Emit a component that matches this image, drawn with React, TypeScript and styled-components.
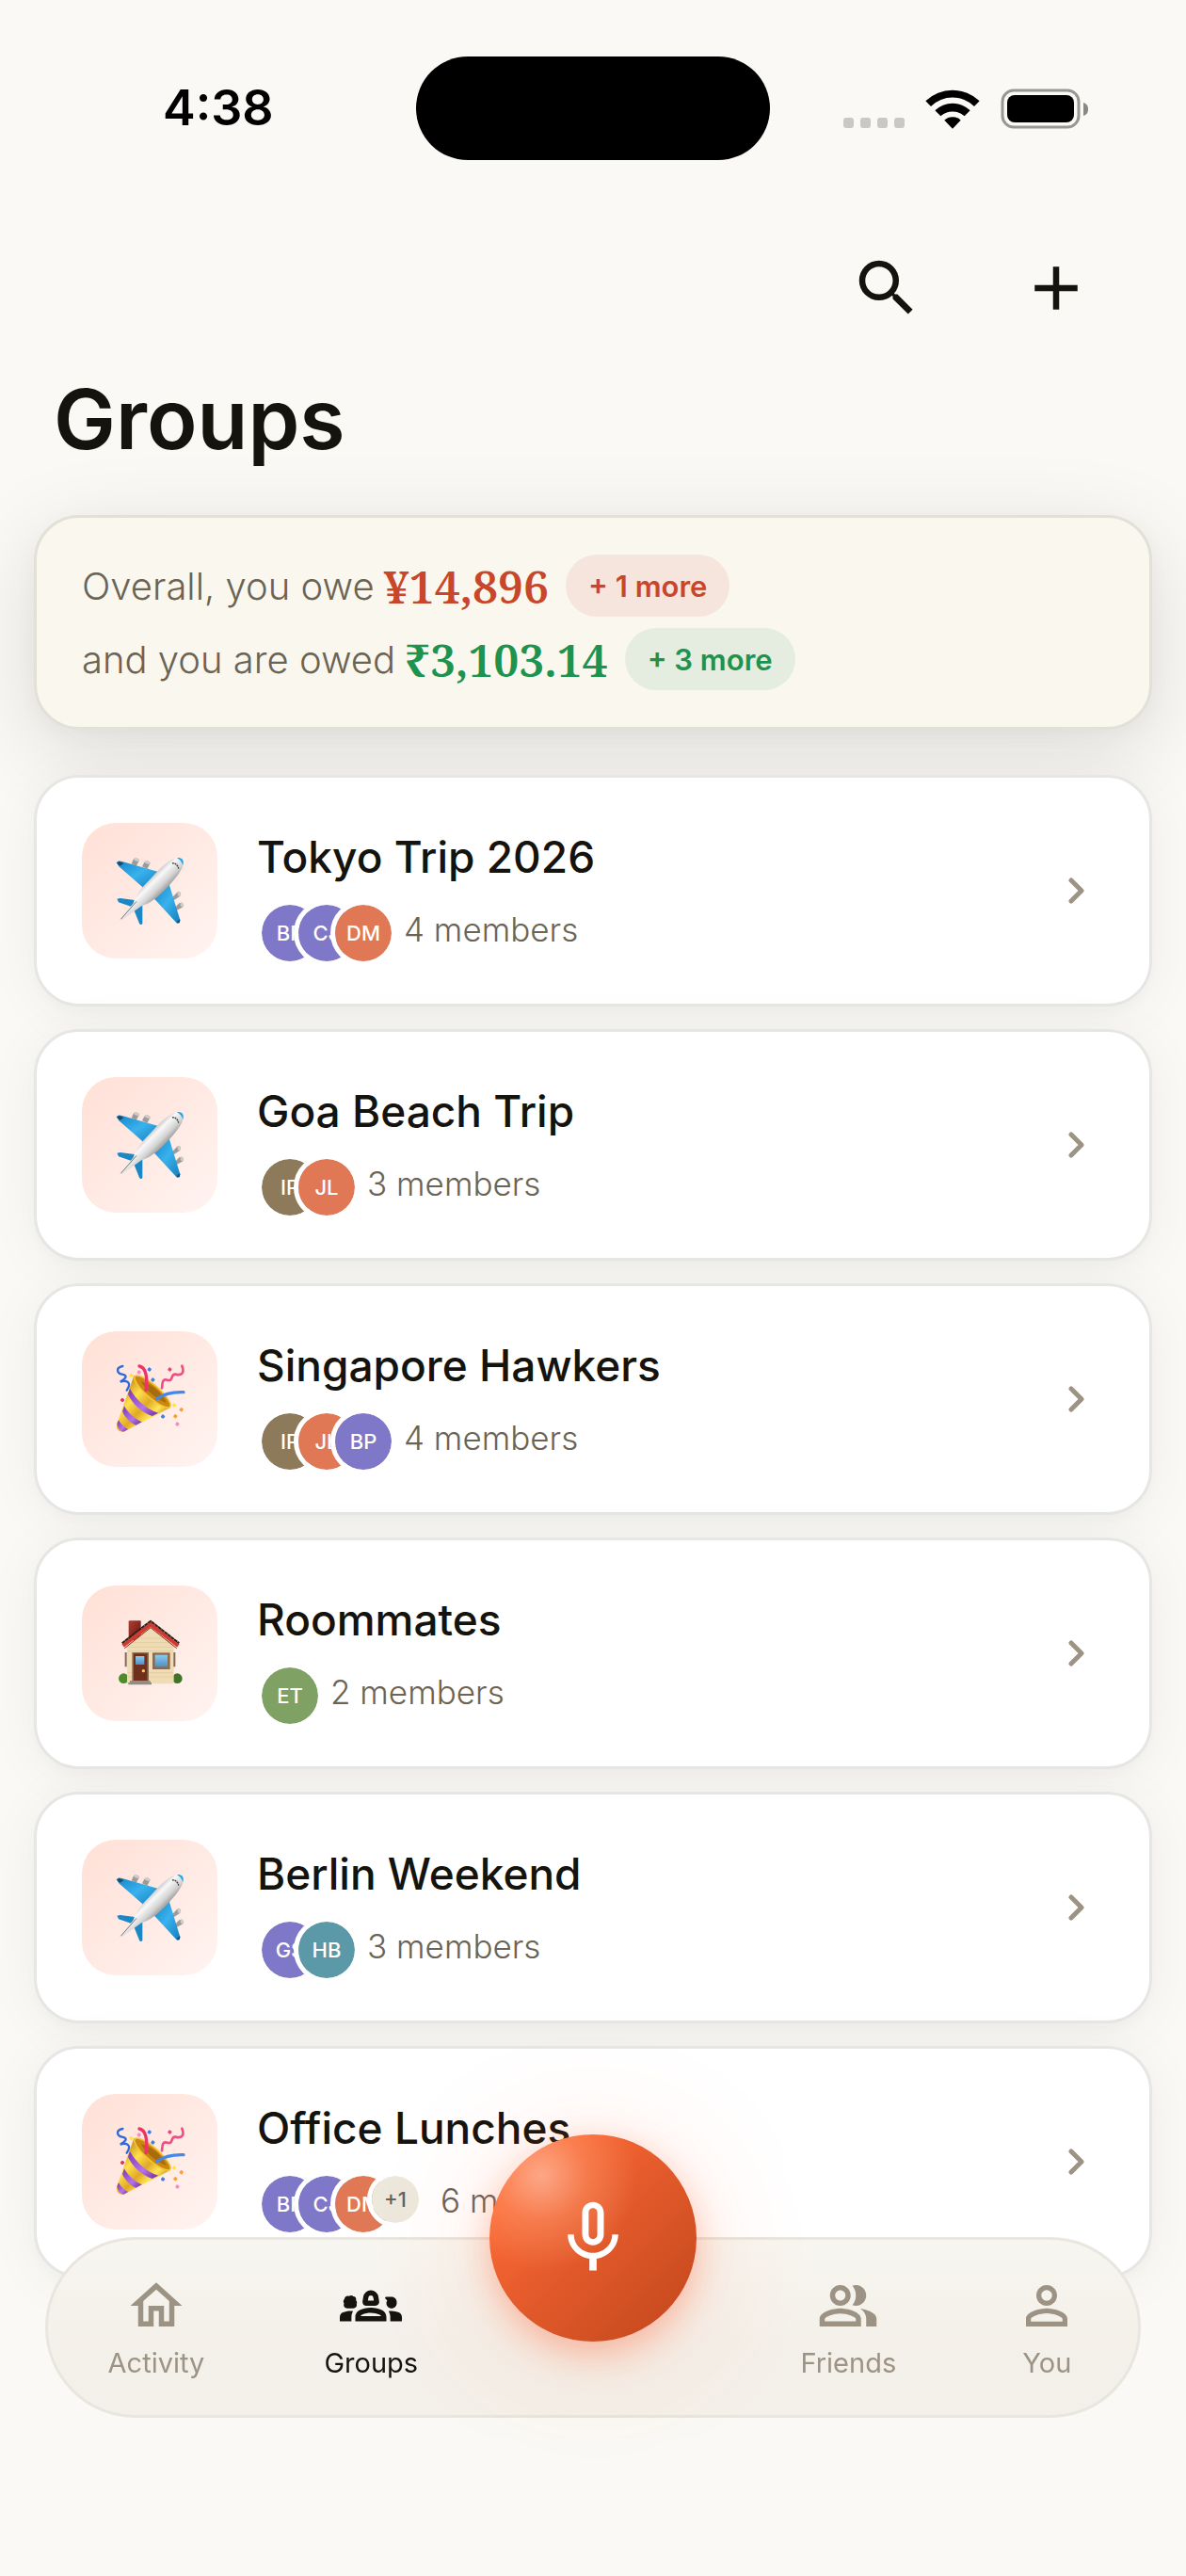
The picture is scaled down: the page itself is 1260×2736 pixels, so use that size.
import React, {useState} from 'react'


import styled, {createGlobalStyle} from 'styled-components';
import {
    MdAdd,
    MdMicNone,
    MdOutlineGroups2,
    MdOutlineHome,
    MdOutlinePeopleAlt,
    MdPersonOutline,
    MdSearch
} from 'react-icons/md';

const GlobalStyle = createGlobalStyle`
  * {
    box-sizing: border-box;
  }
  body {
    margin: 0;
    background: #faf9f5;
    color: #14130e;
    font-family: Inter, sans-serif;
  }
  button {
    padding: 0;
    border: 0;
    background: none;
    color: inherit;
    font: inherit;
    cursor: pointer;
  }
`;

const Screen = styled("div")`
  min-height: 100vh;
  overflow: hidden;
  padding-bottom: 316px;
`;

/* status bar */

const StatusBar = styled("div")`
  display: grid;
  grid-template-columns: 1fr 376px 1fr;
  align-items: center;
  padding-top: 60px;
  color: #000000;
`;

const Time = styled("span")`
  padding-left: 173px;
  font-size: 52px;
  font-weight: 600;
  line-height: 60px;
`;

const Island = styled("div")`
  height: 110px;
  border-radius: 55px;
  background: #000000;
`;

const StatusIcons = styled("div")`
  display: flex;
  justify-content: flex-end;
  align-items: center;
  gap: 22px;
  padding-right: 104px;
`;

/* header */

const Toolbar = styled("div")`
  display: flex;
  justify-content: flex-end;
  gap: 48px;
  padding: 70px 72px 0;
`;

const ToolButton = styled("button")`
  display: flex;
  align-items: center;
  justify-content: center;
  width: 132px;
  height: 132px;
  font-size: 78px;
`;

const Title = styled("h1")`
  margin: 20px 57px 48px;
  font-size: 88px;
  font-weight: 600;
  line-height: 107px;
`;

/* balance summary */

const Summary = styled("section")`
  margin: 0 36px 48px;
  padding: 33px 48px;
  border: 3px solid #e2e1d8;
  border-radius: 48px;
  background: #faf7ee;
  box-shadow: 0 24px 96px rgba(20, 19, 14, 0.12), 0 6px 24px rgba(20, 19, 14, 0.03);
`;

const SummaryLine = styled("div")`
  display: flex;
  align-items: center;
  height: 78px;
  font-size: 40px;
  font-weight: 300;
  color: #6b6354;
`;

const Amount = styled("strong")<{ $tone: string }>`
  margin: 0 18px 0 10px;
  font-family: "Noto Serif", "Liberation Serif", serif;
  font-size: 48px;
  font-weight: 600;
  color: ${props => props.$tone};
`;

const Pill = styled("button")<{ $tone: string; $tint: string }>`
  && {
    height: 66px;
    padding: 0 24px;
    border-radius: 33px;
    background: ${props => props.$tint};
    color: ${props => props.$tone};
    font-size: 31px;
    font-weight: 600;
  }
`;

/* group cards */

const GroupList = styled("ul")`
  display: flex;
  flex-direction: column;
  gap: 24px;
  margin: 0;
  padding: 0 36px;
  list-style: none;
`;

const GroupCard = styled("button")`
  && {
    display: flex;
    align-items: flex-start;
    width: 100%;
    padding: 48px;
    border: 3px solid #e6e6e4;
    border-radius: 48px;
    background: #ffffff;
    text-align: left;
    box-shadow: 0 6px 60px rgba(20, 19, 14, 0.05), 0 6px 12px rgba(20, 19, 14, 0.02);
  }
`;

const Tile = styled("span")`
  display: flex;
  align-items: center;
  justify-content: center;
  width: 144px;
  height: 144px;
  margin-right: 42px;
  border-radius: 36px;
  background: linear-gradient(135deg, #ffe0d6, #fff4f1);
`;

const Info = styled("span")`
  flex: 1;
  padding-top: 6px;
`;

const GroupName = styled("span")`
  display: block;
  font-size: 46px;
  font-weight: 500;
  line-height: 60px;
`;

const MemberRow = styled("span")`
  display: flex;
  align-items: flex-start;
  gap: 8px;
  margin-top: 16px;
`;

const AvatarStack = styled("span")`
  display: flex;
  align-items: flex-start;
  height: 54px;
`;

const Avatar = styled("span")<{ $color: string }>`
  display: flex;
  flex: none;
  align-items: center;
  justify-content: center;
  width: 70px;
  height: 70px;
  border: 5px solid #ffffff;
  border-radius: 50%;
  background: ${props => props.$color};
  background-clip: padding-box;
  color: #ffffff;
  font-size: 22px;
  font-weight: 500;
  & + & {
    margin-left: -31px;
  }
`;

const ExtraAvatar = styled(Avatar)`
  width: 60px;
  height: 60px;
  margin: 0 10px 0 -31px;
  color: #6b6354;
`;

const MemberCount = styled("span")`
  font-size: 35px;
  font-weight: 300;
  line-height: 62px;
  color: #6b6354;
`;

const ChevronBox = styled("span")`
  display: flex;
  align-self: center;
  align-items: center;
  justify-content: center;
  width: 60px;
`;

/* bottom bar */

const TabBar = styled("nav")`
  position: fixed;
  right: 48px;
  bottom: 168px;
  left: 48px;
  display: flex;
  justify-content: space-around;
  align-items: center;
  height: 192px;
  border: 3px solid #e8e6de;
  border-radius: 96px;
  background: linear-gradient(rgba(247, 245, 239, 0.94), rgba(243, 239, 232, 0.94) 60%);
  backdrop-filter: blur(40px);
`;

const Tab = styled("button")<{ $active: boolean }>`
  && {
    display: flex;
    flex-direction: column;
    align-items: center;
    gap: 10px;
    color: ${props => props.$active ? "#14130e" : "#9c9384"};
    font-size: 29px;
    font-weight: 400;
    line-height: 36px;
  }
  svg {
    font-size: 66px;
  }
`;

const MicSlot = styled("span")`
  width: 152px;
`;

const MicButton = styled("button")`
  && {
    position: absolute;
    top: -112px;
    left: 50%;
    display: flex;
    align-items: center;
    justify-content: center;
    width: 220px;
    height: 220px;
    margin-left: -110px;
    border-radius: 50%;
    background:
      radial-gradient(circle at 25% 20%, rgba(255, 210, 190, 0.6), rgba(255, 170, 130, 0.35) 20%, rgba(255, 120, 70, 0) 42%),
      linear-gradient(135deg, #fb6733 20%, #e35a2b 50%, #c0461b);
    color: #ffffff;
    font-size: 92px;
    box-shadow: 0 12px 36px rgba(255, 90, 40, 0.35), 0 12px 132px rgba(255, 107, 53, 0.18);
  }
`;

/* drawings */

const SignalDots = () => (
    <svg width="65" height="43" viewBox="0 0 65 43" fill="#c9c8c4" aria-hidden="true">
        {[0, 18, 36, 54].map(x => <rect key={x} x={x} y="31" width="11" height="11" rx="3"/>)}
    </svg>
);

const Wifi = () => (
    <svg width="58" height="43" viewBox="307 50 174 129" aria-hidden="true">
        <path d="M308 90A124 124 0 0 1 480 90L463 107A98 98 0 0 0 325 107Z"/>
        <path d="M338 120A80 80 0 0 1 450 120L432 138A56 56 0 0 0 356 138Z"/>
        <path d="M368 151A38 38 0 0 1 420 151L394 178Z"/>
    </svg>
);

const Battery = () => (
    <svg width="93" height="43" viewBox="0 0 93 43" aria-hidden="true">
        <rect x="2" y="2" width="81" height="39" rx="12" fill="none" stroke="#989793" strokeWidth="3"/>
        <rect x="7" y="7" width="71" height="29" rx="8"/>
        <path d="M88 15C91 16 93 18 93 22S91 28 88 29Z" fill="#898884"/>
    </svg>
);

const Chevron = () => (
    <svg width="18" height="30" viewBox="0 0 18 30" fill="none" stroke="#9c9384" strokeWidth="5" strokeLinecap="round" strokeLinejoin="round" aria-hidden="true">
        <path d="M4 4L15 15L4 26"/>
    </svg>
);

const Plane = () => (
    <svg width="72" height="72" viewBox="42 54 216 216" overflow="visible" aria-hidden="true">
        <defs>
            <linearGradient id="planeBody" x1="0.35" y1="0.35" x2="0.65" y2="0.65">
                <stop offset="0" stopColor="#a5a5a7"/>
                <stop offset="0.35" stopColor="#f8f8f8"/>
                <stop offset="0.65" stopColor="#d5d4d4"/>
                <stop offset="1" stopColor="#807f80"/>
            </linearGradient>
            <linearGradient id="planeWing" x1="0" y1="0" x2="1" y2="1">
                <stop offset="0" stopColor="#1583c4"/>
                <stop offset="0.5" stopColor="#39b2ee"/>
                <stop offset="1" stopColor="#147dbc"/>
            </linearGradient>
        </defs>
        <g fill="#9d9b99">
            <path d="M92 76L98 62C106 54 119 60 116 67L107 84Z"/>
            <path d="M126 85L133 71C141 63 154 69 151 76L142 93Z"/>
            <path d="M222 184L237 168C246 160 253 172 246 180L227 193Z"/>
            <path d="M230 217L244 202C255 196 262 206 254 215L234 226Z"/>
        </g>
        <g fill="#ceccca">
            <ellipse cx="108" cy="63" rx="9" ry="5" transform="rotate(20 108 63)"/>
            <ellipse cx="143" cy="72" rx="9" ry="5" transform="rotate(20 143 72)"/>
            <ellipse cx="244" cy="173" rx="5" ry="8" transform="rotate(-20 244 173)"/>
            <ellipse cx="253" cy="207" rx="5" ry="8" transform="rotate(-20 253 207)"/>
        </g>
        <path d="M44 73C48 67 54 66 62 69L178 102L130 153L52 85Z" fill="url(#planeWing)"/>
        <path d="M46 74L54 69L67 75L56 83Z" fill="#174a6b"/>
        <path d="M211 138L247 256C247 264 242 268 235 264L161 184Z" fill="url(#planeWing)"/>
        <path d="M239 258L247 253L245 265L236 265Z" fill="#174a6b"/>
        <path d="M46 188L56 186L107 193L94 214L51 199Z" fill="#1a87c6"/>
        <path d="M99 221L127 205L127 266C125 272 120 271 117 266Z" fill="#1a87c6"/>
        <path d="M58 252L98 202C104 178 123 154 151 126C189 83 224 50 247 58C263 65 260 84 240 112C206 157 160 202 124 211L62 255Z" fill="url(#planeBody)"/>
        <path d="M237 58C252 54 261 66 256 81C253 72 247 63 237 58Z" fill="#23a6e8"/>
        <path d="M222 75C231 72 241 82 242 92" fill="none" stroke="#3d3c3b" strokeWidth="4" strokeDasharray="6 2"/>
        <path d="M58 253L108 196" stroke="#77736f" strokeWidth="3"/>
    </svg>
);

type Speck = [number, number, string];

const confetti: Speck[] = [
    [119, 242, '#ffe53d'], [144, 232, '#f78bbf'], [177, 223, '#3b80ea'], [188, 256, '#3b80ea'],
    [242, 223, '#e8467a'], [91, 320, '#dc355f'], [256, 337, '#ffe53d'], [279, 351, '#fb9f35'],
    [260, 372, '#fb9f35'], [220, 373, '#3b80ea'], [266, 397, '#f78bbf'],
];

const Party = () => (
    <svg width="72" height="72" viewBox="70 210 216 216" overflow="visible" aria-hidden="true">
        <defs>
            <linearGradient id="cone" x1="0" y1="0.3" x2="0.7" y2="1">
                <stop offset="0" stopColor="#c28a14"/>
                <stop offset="0.3" stopColor="#ffe04c"/>
                <stop offset="0.55" stopColor="#e0a924"/>
                <stop offset="0.75" stopColor="#ffe656"/>
                <stop offset="1" stopColor="#b57a12"/>
            </linearGradient>
            <linearGradient id="stripe" x1="0" y1="0" x2="1" y2="1">
                <stop offset="0" stopColor="#7a35b8"/>
                <stop offset="0.6" stopColor="#b574ea"/>
                <stop offset="1" stopColor="#6d2aa0"/>
            </linearGradient>
        </defs>
        <path d="M128 243L73 398C70 415 83 425 98 421L243 346C252 330 170 238 128 243Z" fill="url(#cone)"/>
        <path d="M115 284C133 318 164 348 205 362L186 372C150 359 124 334 109 303Z" fill="url(#stripe)"/>
        <path d="M97 340C108 361 129 380 153 391L134 401C113 392 98 374 91 357Z" fill="url(#stripe)"/>
        <path d="M79 385C87 399 97 408 109 414L95 422C83 419 75 408 74 396Z" fill="url(#stripe)"/>
        <ellipse cx="187" cy="294" rx="74" ry="20" transform="rotate(41 187 294)" fill="#c98911" stroke="#f5c536" strokeWidth="5"/>
        <path d="M150 262C190 270 222 305 232 330C205 322 170 296 150 262Z" fill="#a96c0c"/>
        <g fill="none" strokeLinecap="round">
            <path d="M92 213C68 218 74 236 90 239C114 244 96 256 84 263C100 257 125 262 105 290" stroke="#2d68dc" strokeWidth="7"/>
            <path d="M145 213C166 216 172 250 166 290" stroke="#ec3564" strokeWidth="10"/>
            <path d="M281 212C292 239 275 243 262 239C242 235 256 264 234 257C216 252 219 271 217 283" stroke="#ee4e82" strokeWidth="8"/>
            <path d="M201 317C225 300 255 295 286 296" stroke="#4687ea" strokeWidth="10"/>
        </g>
        {confetti.map(([x, y, color]) => (
            <rect key={`${x}-${y}`} x={x - 5} y={y - 5} width="11" height="11" rx="3" fill={color} transform={`rotate(35 ${x} ${y})`}/>
        ))}
    </svg>
);

const House = () => (
    <svg width="72" height="72" viewBox="70 120 216 216" overflow="visible" aria-hidden="true">
        <defs>
            <linearGradient id="chimney" x1="0" y1="0" x2="1" y2="1">
                <stop offset="0" stopColor="#b53c30"/>
                <stop offset="1" stopColor="#5c1712"/>
            </linearGradient>
            <linearGradient id="glass" x1="0" y1="0" x2="0" y2="1">
                <stop offset="0" stopColor="#8ccbee"/>
                <stop offset="1" stopColor="#4f8fc4"/>
            </linearGradient>
        </defs>
        <rect x="111" y="124" width="39" height="62" rx="3" fill="url(#chimney)"/>
        <circle cx="95" cy="308" r="16" fill="#4f8a2c"/>
        <circle cx="266" cy="308" r="16" fill="#3f7426"/>
        <path d="M106 204L181 144L255 204V325H106Z" fill="#f0dcb4"/>
        <path d="M140 180H222M120 194H242M108 208H253M108 221H253M108 290H253M108 303H253" stroke="#dcc79c" strokeWidth="2"/>
        <path d="M99 225H105V271H99ZM254 225H260V271H254Z" fill="#84694f"/>
        <path d="M91 197L181 127L271 197" fill="none" stroke="#25201f" strokeWidth="9" strokeLinejoin="round" strokeDasharray="12 1"/>
        <path d="M93 204L181 136L269 204" fill="none" stroke="#cf3a31" strokeWidth="12"/>
        <path d="M98 212L181 146L264 212" fill="none" stroke="#8f2019" strokeWidth="3"/>
        <rect x="122" y="225" width="53" height="92" fill="#8b6a50"/>
        <rect x="127" y="229" width="43" height="88" fill="#702f1c"/>
        <rect x="133" y="237" width="28" height="27" fill="url(#glass)"/>
        <circle cx="158" cy="284" r="5" fill="#ffd04e"/>
        <rect x="187" y="226" width="56" height="53" fill="#8b6a50"/>
        <rect x="195" y="233" width="40" height="38" fill="url(#glass)"/>
        <path d="M115 315H180V321H184V328H110V321H115Z" fill="#938c86"/>
    </svg>
);

const violet = "#7f77c8";
const coral = "#e07856";
const olive = "#8c7a5b";
const green = "#7fa264";
const teal = "#5b99a8";

type Member = { initials: string; color: string };
type Group = {
    name: string;
    Icon: () => React.JSX.Element;
    members: Member[];
    extra?: number;
    count: number;
};

const bp = {initials: "BP", color: violet};
const cj = {initials: "CJ", color: violet};
const dm = {initials: "DM", color: coral};
const ip = {initials: "IP", color: olive};
const jl = {initials: "JL", color: coral};

const groups: Group[] = [
    {name: "Tokyo Trip 2026", Icon: Plane, members: [bp, cj, dm], count: 4},
    {name: "Goa Beach Trip", Icon: Plane, members: [ip, jl], count: 3},
    {name: "Singapore Hawkers", Icon: Party, members: [ip, jl, bp], count: 4},
    {name: "Roommates", Icon: House, members: [{initials: "ET", color: green}], count: 2},
    {name: "Berlin Weekend", Icon: Plane, members: [{initials: "GS", color: violet}, {initials: "HB", color: teal}], count: 3},
    {name: "Office Lunches", Icon: Party, members: [bp, cj, dm], extra: 1, count: 6},
];

const leftTabs = [
    {label: "Activity", Icon: MdOutlineHome},
    {label: "Groups", Icon: MdOutlineGroups2},
];

const rightTabs = [
    {label: "Friends", Icon: MdOutlinePeopleAlt},
    {label: "You", Icon: MdPersonOutline},
];

function App() {

    const [activeTab, setActiveTab] = useState("Groups");

    const renderTab = ({label, Icon}: typeof leftTabs[number]) => (
        <Tab key={label} $active={label === activeTab} onClick={() => setActiveTab(label)}>
            <Icon/>
            {label}
        </Tab>
    );

    return (
        <Screen>
            <GlobalStyle/>
            <StatusBar>
                <Time>4:38</Time>
                <Island/>
                <StatusIcons>
                    <SignalDots/>
                    <Wifi/>
                    <Battery/>
                </StatusIcons>
            </StatusBar>

            <Toolbar>
                <ToolButton aria-label="Search"><MdSearch/></ToolButton>
                <ToolButton aria-label="Add group"><MdAdd/></ToolButton>
            </Toolbar>
            <Title>Groups</Title>

            <Summary>
                <SummaryLine>
                    Overall, you owe
                    <Amount $tone="#c8472b">¥14,896</Amount>
                    <Pill $tone="#c8472b" $tint="#f6e5dd">+ 1 more</Pill>
                </SummaryLine>
                <SummaryLine>
                    and you are owed
                    <Amount $tone="#1e9350">₹3,103.14</Amount>
                    <Pill $tone="#1e9350" $tint="#e5ede0">+ 3 more</Pill>
                </SummaryLine>
            </Summary>

            <GroupList>
                {groups.map(({name, Icon, members, extra, count}) => (
                    <li key={name}>
                        <GroupCard>
                            <Tile><Icon/></Tile>
                            <Info>
                                <GroupName>{name}</GroupName>
                                <MemberRow>
                                    <AvatarStack>
                                        {members.map(member => (
                                            <Avatar key={member.initials} $color={member.color}>{member.initials}</Avatar>
                                        ))}
                                        {extra && <ExtraAvatar $color="#ede8dc">+{extra}</ExtraAvatar>}
                                    </AvatarStack>
                                    <MemberCount>{count} members</MemberCount>
                                </MemberRow>
                            </Info>
                            <ChevronBox><Chevron/></ChevronBox>
                        </GroupCard>
                    </li>
                ))}
            </GroupList>

            <TabBar>
                {leftTabs.map(renderTab)}
                <MicSlot/>
                {rightTabs.map(renderTab)}
                <MicButton aria-label="Record"><MdMicNone/></MicButton>
            </TabBar>
        </Screen>
    )
}

export default App
